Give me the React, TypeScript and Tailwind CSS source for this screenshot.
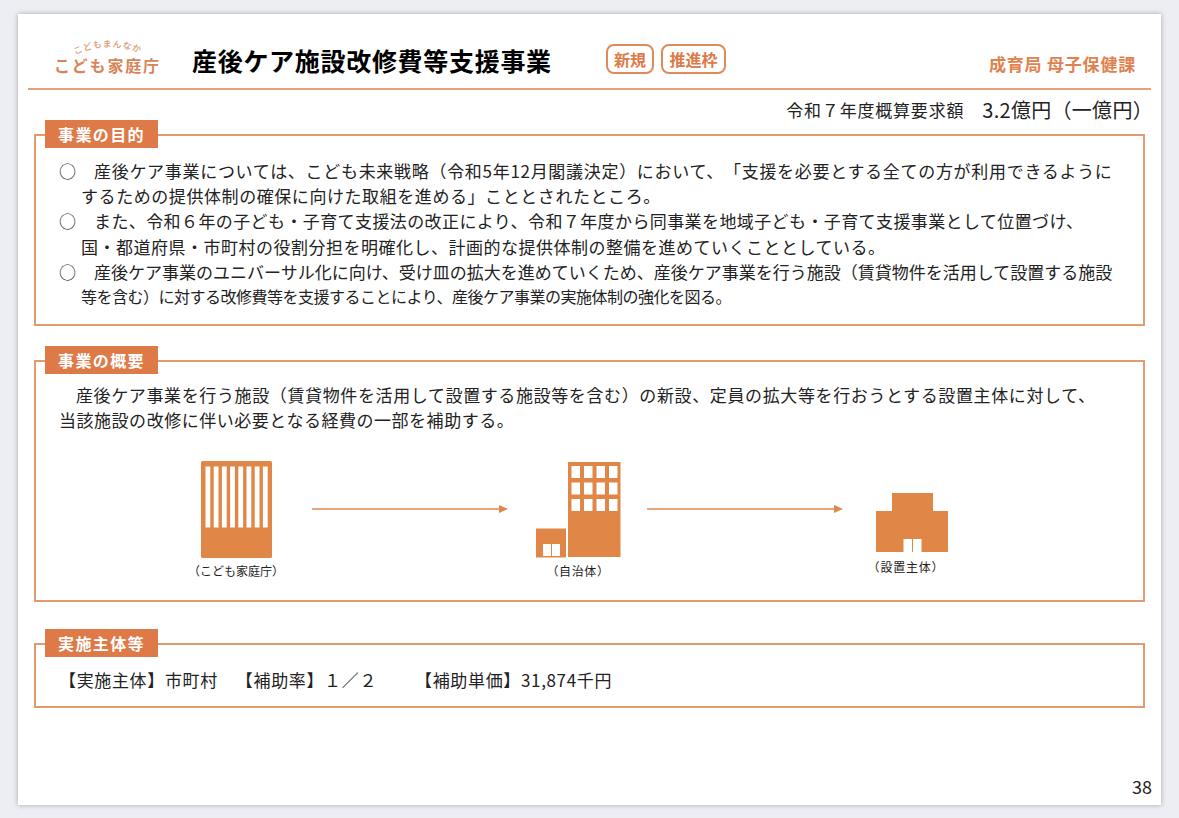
import type { ReactNode } from "react";

const jp = "font-['Noto_Sans_CJK_JP','Noto_Sans',sans-serif]";

function Section({ label, className, children }: { label: string; className: string; children: ReactNode }) {
  return (
    <section className={`relative mx-[16px] border-2 border-[#e39a6d] ${className}`}>
      <h2 className="absolute left-[9px] top-[-16px] flex h-[28px] w-[113px] items-center justify-center bg-[#dd7a47] text-[16px] leading-none font-bold tracking-[1.4px] text-white">
        {label}
      </h2>
      {children}
    </section>
  );
}

function Arrow({ className }: { className: string }) {
  return (
    <svg className={className} width="196" height="10" viewBox="0 0 196 10">
      <path d="M0 5H188" stroke="#e0874c" strokeWidth="1.6" />
      <path d="M187 1L196 5L187 9Z" fill="#e0874c" />
    </svg>
  );
}

function AgencyIcon() {
  const stripes = [0, 1, 2, 3, 4, 5, 6, 7];
  return (
    <svg width="71" height="97" viewBox="0 0 71 97">
      <rect width="71" height="97" rx="1.5" fill="#e08646" />
      {stripes.map((i) => (
        <rect key={i} x={4.5 + i * 8.2} y="5.5" width="4.8" height="61" fill="#fff" />
      ))}
    </svg>
  );
}

function CityIcon() {
  const xs = [3.5, 16, 28.5, 41];
  const ys = [5, 21.5, 38];
  return (
    <svg width="86" height="97" viewBox="0 0 86 97">
      <rect x="33" y="1" width="52.5" height="95" fill="#e08646" />
      {ys.map((y) =>
        xs.map((x) => <rect key={`${x}-${y}`} x={33 + x} y={y} width="8.5" height="12" fill="#fff" />)
      )}
      <rect x="1" y="67.500" width="30" height="29" fill="#e08646" />
      <rect x="8" y="83" width="8" height="12" fill="#fff" />
      <rect x="17" y="83" width="8" height="12" fill="#fff" />
    </svg>
  );
}

function FacilityIcon() {
  return (
    <svg width="72" height="60" viewBox="0 0 72 60">
      <path d="M16 0H57V18H72V59H0V18H16Z" fill="#e08646" />
      <rect x="27.500" y="46" width="8.500" height="13" fill="#fff" />
      <rect x="37" y="46" width="8.500" height="13" fill="#fff" />
    </svg>
  );
}

export default function App() {
  return (
    <div className={`${jp} h-[818px] w-[1179px] overflow-hidden bg-[#eceef4] pt-[14px] pl-[18px] text-[#222] [text-spacing-trim:space-all]`}>
      <div className="flex h-[791px] w-[1143px] flex-col bg-white shadow-[0_0_5px_rgba(0,0,0,0.3)]">
        {/* header */}
        <header className="mx-[10px] flex h-[76px] shrink-0 items-start border-b-2 border-[#e5a27a]">
          <div className="ml-[26px] flex w-[110px] flex-col items-start pt-[23px]">
            <svg width="104" height="18" viewBox="0 0 104 18" className="overflow-visible">
              <path id="logo-arc" d="M21 18Q55 2 90 18" fill="none" />
              <text fontSize="9" fill="#dd9a75" letterSpacing="0.6" fontWeight="500">
                <textPath href="#logo-arc">こどもまんなか</textPath>
              </text>
            </svg>
            <span className="text-[16px] leading-[20px] font-bold tracking-[1.8px] whitespace-nowrap text-[#d8845a]">
              こども家庭庁
            </span>
          </div>
          <h1 className="mt-[27px] ml-[28px] w-[360px] text-[25px] leading-[38px] font-bold tracking-[0.7px] whitespace-nowrap text-black">
            産後ケア施設改修費等支援事業
          </h1>
          <div className="mt-[30px] ml-[54px] flex gap-[7px]">
            <span className="flex h-[30px] w-[48px] items-center justify-center rounded-[8px] border-2 border-[#e08a5a] text-[16px] font-bold text-[#dd7a47]">
              新規
            </span>
            <span className="flex h-[30px] w-[65px] items-center justify-center rounded-[8px] border-2 border-[#e08a5a] text-[16px] font-bold text-[#dd7a47]">
              推進枠
            </span>
          </div>
          <div className="mt-[38px] ml-auto mr-[15px] text-[17px] leading-[24px] font-bold tracking-[0.8px] whitespace-nowrap text-[#e0824e]">
            成育局 母子保健課
          </div>
        </header>

        {/* budget */}
        <div className="mr-[8px] flex h-[40px] shrink-0 items-center justify-end whitespace-nowrap">
          <span className="text-[17px] tracking-[0.8px]">令和７年度概算要求額</span>
          <span className="ml-[18px] text-[20px] tracking-[0.3px]">3.2億円（一億円）</span>
        </div>

        <Section label="事業の目的" className="mt-[4px] h-[192px] shrink-0">
          <div className="pt-[22px] pl-[24px] text-[17px] leading-[25.200px] whitespace-nowrap">
            <p className="-ml-[1px] flex tracking-[0.7px]"><span className="w-[35px] shrink-0 tracking-normal">○</span>産後ケア事業については、こども未来戦略（令和5年12月閣議決定）において、「支援を必要とする全ての方が利用できるように</p>
            <p className="pl-[21px] tracking-[0.57px]">するための提供体制の確保に向けた取組を進める」こととされたところ。</p>
            <p className="-ml-[1px] flex tracking-[0.4px]"><span className="w-[35px] shrink-0 tracking-normal">○</span>また、令和６年の子ども・子育て支援法の改正により、令和７年度から同事業を地域子ども・子育て支援事業として位置づけ、</p>
            <p className="pl-[21px] tracking-[0.5px]">国・都道府県・市町村の役割分担を明確化し、計画的な提供体制の整備を進めていくこととしている。</p>
            <p className="-ml-[1px] flex"><span className="w-[35px] shrink-0">○</span>産後ケア事業のユニバーサル化に向け、受け皿の拡大を進めていくため、産後ケア事業を行う施設（賃貸物件を活用して設置する施設</p>
            <p className="pl-[21px] text-[16px] tracking-[-0.5px]">等を含む）に対する改修費等を支援することにより、産後ケア事業の実施体制の強化を図る。</p>
          </div>
        </Section>

        <Section label="事業の概要" className="mt-[34px] h-[242px] shrink-0">
          <div className="pt-[20px] pl-[23px] text-[17px] leading-[25px] whitespace-nowrap">
            <p className="pl-[17px] tracking-[0.62px]">産後ケア事業を行う施設（賃貸物件を活用して設置する施設等を含む）の新設、定員の拡大等を行おうとする設置主体に対して、</p>
            <p className="tracking-[0.53px]">当該施設の改修に伴い必要となる経費の一部を補助する。</p>
          </div>
          <div className="mt-[29px] ml-[150px] flex items-start text-[12px] leading-[16px]">
            <div className="flex w-[100px] flex-col items-center gap-[5px]">
              <AgencyIcon />
              <span>（こども家庭庁）</span>
            </div>
            <Arrow className="mt-[43px] ml-[26px]" />
            <div className="ml-[20px] flex w-[100px] flex-col items-center gap-[5px]">
              <CityIcon />
              <span className="tracking-[0.6px]">（自治体）</span>
            </div>
            <Arrow className="mt-[43px] ml-[19px]" />
            <div className="ml-[19px] flex w-[100px] flex-col items-center gap-[6px] pt-[32px]">
              <FacilityIcon />
              <span className="mr-[12px] tracking-[0.8px]">（設置主体）</span>
            </div>
          </div>
        </Section>

        <Section label="実施主体等" className="mt-[41px] h-[65px] shrink-0">
          <div className="flex h-full items-center pt-[8px] pl-[23px] text-[17px] leading-[24px] tracking-[0.65px] whitespace-nowrap">
            <span>【実施主体】市町村</span>
            <span className="ml-[18px]">【補助率】１／２</span>
            <span className="ml-[38px]">【補助単価】31,874千円</span>
          </div>
        </Section>

        <footer className="mt-auto mr-[9px] mb-[7px] text-right text-[18px] leading-[24px]">38</footer>
      </div>
    </div>
  );
}
